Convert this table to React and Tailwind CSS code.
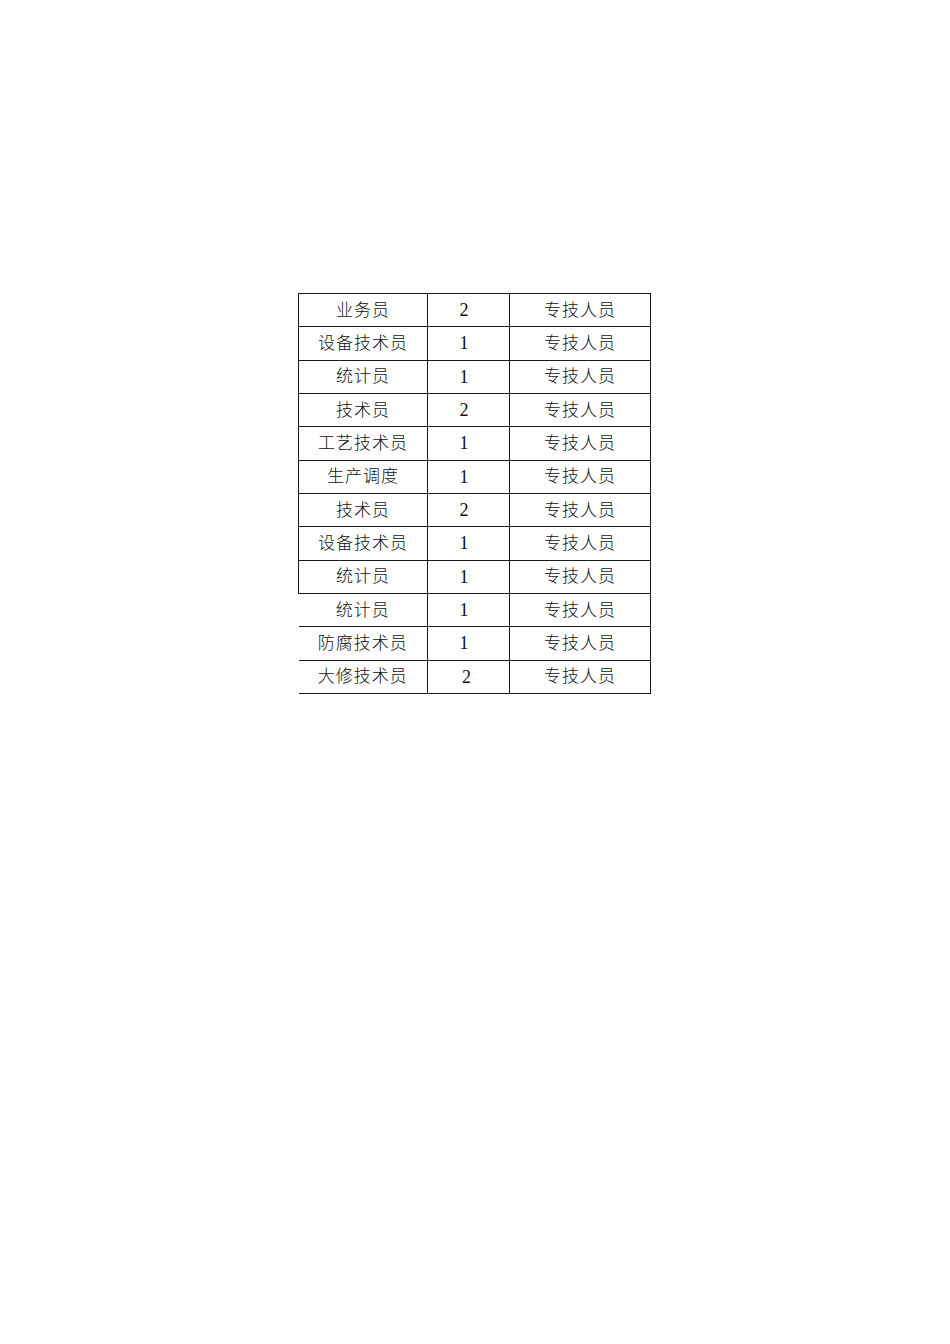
const rows = [
  ['业务员', '2', '专技人员'],
  ['设备技术员', '1', '专技人员'],
  ['统计员', '1', '专技人员'],
  ['技术员', '2', '专技人员'],
  ['工艺技术员', '1', '专技人员'],
  ['生产调度', '1', '专技人员'],
  ['技术员', '2', '专技人员'],
  ['设备技术员', '1', '专技人员'],
  ['统计员', '1', '专技人员'],
  ['统计员', '1', '专技人员', true],
  ['防腐技术员', '1', '专技人员', true],
  ['大修技术员', '2', '专技人员', true, true],
];

export default function App() {
  return (
    <div
      className="w-[950px] h-[1344px] bg-white pt-[293px] pl-[298px] text-[#111]"
      style={{ fontFamily: '"Liberation Serif", "Noto Sans CJK SC", serif' }}
    >
      <table className="border-collapse w-[352px] table-fixed">
        <colgroup>
          <col className="w-[129px]" />
          <col className="w-[82px]" />
          <col className="w-[141px]" />
        </colgroup>
        <tbody>
          {rows.map(([name, num, type, noLeft, shift], i) => (
            <tr key={i} className="h-[33.33px]">
              <td
                className={`border border-[#1a1a1a] text-center text-[17px] font-light tracking-[1px] leading-none p-0 ${noLeft ? 'border-l-0' : ''}`}
              >
                {name}
              </td>
              <td
                className={`border border-[#1a1a1a] text-center text-[18px] leading-none p-0 ${shift ? 'pr-[4px]' : 'pr-[9px]'}`}
              >
                {num}
              </td>
              <td className="border border-[#1a1a1a] text-center text-[17px] font-light tracking-[1px] leading-none p-0">
                {type}
              </td>
            </tr>
          ))}
        </tbody>
      </table>
    </div>
  );
}
